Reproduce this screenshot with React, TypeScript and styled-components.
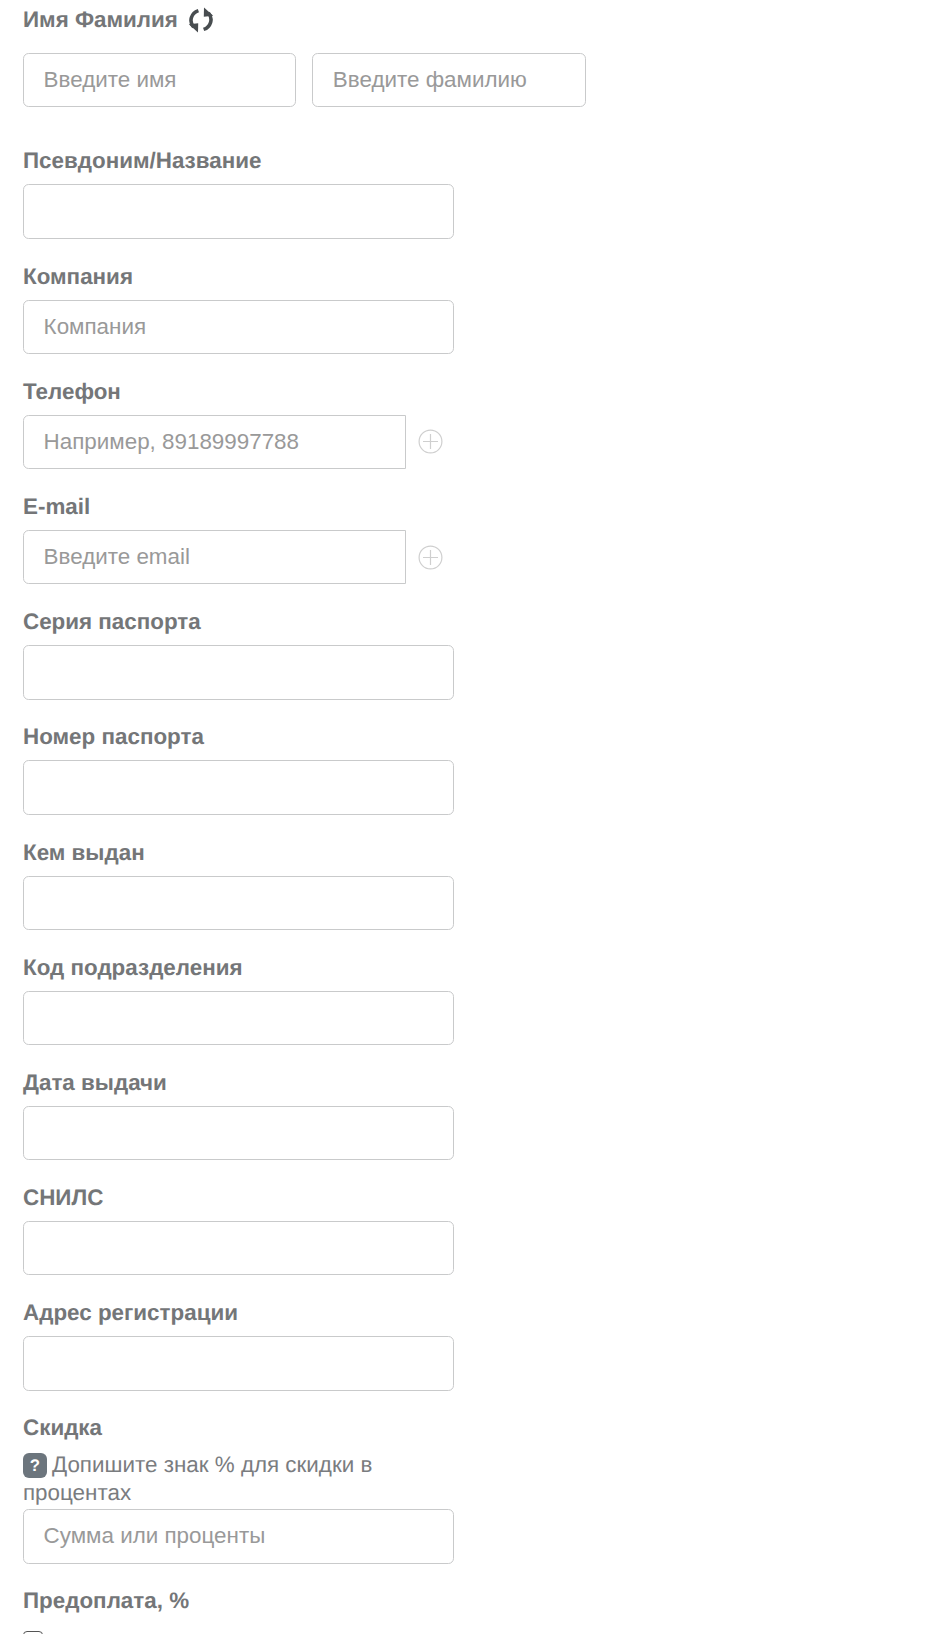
import React, { FC } from "react";
import styled, { createGlobalStyle } from "styled-components";

const GlobalStyle = createGlobalStyle`
  html, body {
    margin: 0;
    padding: 0;
    background: #fff;
    overflow: hidden;
  }
`;

const Page = styled.div`
  width: 950px;
  height: 1634px;
  overflow: hidden;
  box-sizing: border-box;
  padding: 4px 0 0 23px;
  font-family: "Liberation Sans", Arial, sans-serif;
  font-size: 22.4px;
  color: #7a7c7f;
  text-rendering: geometricPrecision;
`;

const Field = styled.div`
  width: 431px;
  margin-bottom: 21.8px;
`;

const Label = styled.label`
  display: flex;
  align-items: center;
  gap: 10px;
  height: 31px;
  margin-bottom: 8px;
  font-weight: 700;
  line-height: 31px;
  color: #747678;
`;

const Input = styled.input<{ $square?: boolean }>`
  display: block;
  box-sizing: border-box;
  width: 100%;
  height: 54.4px;
  padding: 0 19.6px;
  border: 1px solid #c9cacb;
  border-radius: ${p => (p.$square ? "5.6px 0 0 5.6px" : "5.6px")};
  background: #fff;
  outline: none;
  font-family: inherit;
  font-size: 22.4px;
  color: #555;

  &::placeholder {
    color: #999;
    opacity: 1;
  }
`;

const NameRow = styled.div`
  display: flex;
  gap: 16px;
  margin-top: 18px;
  margin-bottom: 38px;
`;

const NameInput = styled(Input)`
  width: 273.25px;
`;

const InputRow = styled.div`
  display: flex;
  align-items: center;
  gap: 12px;
`;

const PhoneInput = styled(Input)`
  width: 383px;
  flex: none;
`;

const Hint = styled.div`
  margin-bottom: 1.7px;
  line-height: 28px;
`;

const HintBadge = styled.span`
  display: inline-block;
  width: 24px;
  height: 25px;
  margin-right: 5px;
  border-radius: 6px;
  background: #6c757d;
  color: #fff;
  font-size: 16.8px;
  font-weight: 700;
  line-height: 25px;
  text-align: center;
  vertical-align: 1px;
`;

const Checkbox = styled.span`
  display: block;
  box-sizing: border-box;
  width: 20px;
  height: 20px;
  margin-top: 15px;
  border: 1px solid #555;
  border-radius: 4px;
`;

const RefreshIcon: FC = () => (
  <svg width="26" height="26" viewBox="0 0 26 26" fill="none">
    <path d="M10.4 3.6 C3.2 6 0.6 14.4 5.6 20" stroke="#484d50" strokeWidth="3.6" />
    <path d="M0.8 17.2 L10.2 16.2 L10 25.6 Z" fill="#484d50" />
    <path d="M15.6 22.4 C22.8 20 25.4 11.6 20.4 6" stroke="#484d50" strokeWidth="3.6" />
    <path d="M25.2 8.8 L15.8 9.8 L16 0.4 Z" fill="#484d50" />
  </svg>
);

const PlusIcon: FC = () => (
  <svg width="25" height="25" viewBox="0 0 25 25" fill="none" stroke="#cfcfcf" strokeWidth="1.2">
    <circle cx="12.5" cy="12.5" r="11.4" />
    <path d="M12.5 5V20M5 12.5H20" />
  </svg>
);

const plainFields = [
  { title: "Псевдоним/Название" },
  { title: "Компания", placeholder: "Компания" },
  { title: "Телефон", placeholder: "Например, 89189997788", addable: true },
  { title: "E-mail", placeholder: "Введите email", addable: true },
  { title: "Серия паспорта" },
  { title: "Номер паспорта" },
  { title: "Кем выдан" },
  { title: "Код подразделения" },
  { title: "Дата выдачи" },
  { title: "СНИЛС" },
  { title: "Адрес регистрации" },
];

const App: FC = () => (
  <>
    <GlobalStyle />
    <Page>
      <Label>
        Имя Фамилия <RefreshIcon />
      </Label>
      <NameRow>
        <NameInput placeholder="Введите имя" />
        <NameInput placeholder="Введите фамилию" />
      </NameRow>
      {plainFields.map(f => (
        <Field key={f.title}>
          <Label>{f.title}</Label>
          {f.addable ? (
            <InputRow>
              <PhoneInput $square placeholder={f.placeholder} />
              <PlusIcon />
            </InputRow>
          ) : (
            <Input placeholder={f.placeholder} />
          )}
        </Field>
      ))}
      <Field>
        <Label>Скидка</Label>
        <Hint>
          <HintBadge>?</HintBadge>Допишите знак % для скидки в процентах
        </Hint>
        <Input placeholder="Сумма или проценты" />
      </Field>
      <Field>
        <Label>Предоплата, %</Label>
        <Checkbox />
      </Field>
    </Page>
  </>
);

export default App;
